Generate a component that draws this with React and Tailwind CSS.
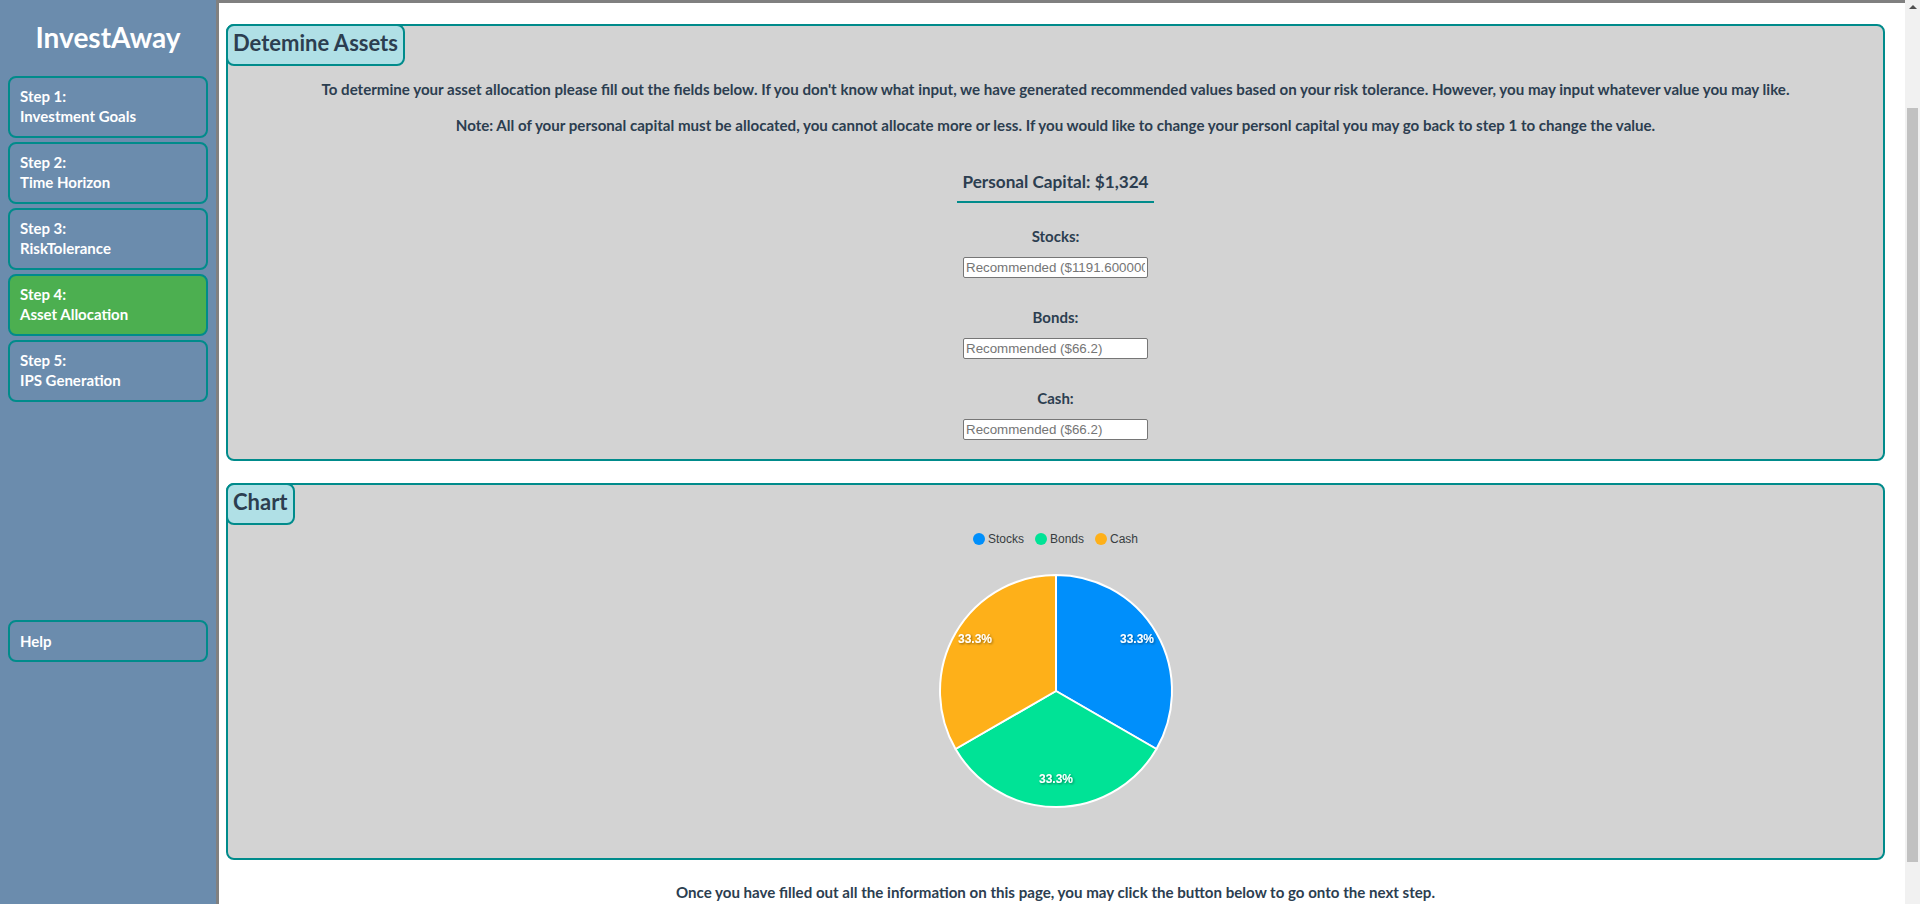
import React from "react";

const steps = [
  ["Step 1:", "Investment Goals", false],
  ["Step 2:", "Time Horizon", false],
  ["Step 3:", "RiskTolerance", false],
  ["Step 4:", "Asset Allocation", true],
  ["Step 5:", "IPS Generation", false],
];

function Pie() {
  const cx = 120, cy = 120, r = 116;
  const p = (deg) => {
    const a = ((deg - 90) * Math.PI) / 180;
    return [cx + r * Math.cos(a), cy + r * Math.sin(a)];
  };
  const slice = (a0, a1) => {
    const [x0, y0] = p(a0);
    const [x1, y1] = p(a1);
    return `M${cx},${cy} L${x0},${y0} A${r},${r} 0 0 1 ${x1},${y1} Z`;
  };
  return (
    <svg width="240" height="240" viewBox="0 0 240 240">
      <defs>
        <filter id="ds" x="-20%" y="-20%" width="140%" height="140%">
          <feDropShadow dx="1" dy="1" stdDeviation="1" floodColor="#000" floodOpacity="0.45" />
        </filter>
      </defs>
      <path d={slice(0, 120)} fill="#008FFB" stroke="#fff" strokeWidth="2" />
      <path d={slice(120, 240)} fill="#00E396" stroke="#fff" strokeWidth="2" />
      <path d={slice(240, 360)} fill="#FEB019" stroke="#fff" strokeWidth="2" />
      <g
        fill="#fff"
        fontFamily="Helvetica, 'Liberation Sans', Arial, sans-serif"
        fontSize="12"
        fontWeight="bold"
        textAnchor="middle"
        filter="url(#ds)"
      >
        <text x="201" y="72">33.3%</text>
        <text x="120" y="212">33.3%</text>
        <text x="39" y="72">33.3%</text>
      </g>
    </svg>
  );
}

function Field({ label, placeholder }) {
  return (
    <div className="flex flex-col items-center">
      <div className="text-[15px] font-bold leading-[18px]">{label}</div>
      <input
        className="mt-[12px] h-[21px] w-[185px] rounded-[2px] border border-[#767676] bg-white px-[2px] text-[13.33px] text-black placeholder:text-[#757575] outline-none"
        style={{ fontFamily: "'Liberation Sans', Arial, sans-serif" }}
        placeholder={placeholder}
      />
    </div>
  );
}

export default function App() {
  return (
    <div
      className="flex h-[904px] w-[1920px] overflow-hidden bg-white text-[#2c3e50]"
      style={{ fontFamily: "Lato, 'Open Sans', sans-serif" }}
    >
      <aside className="flex w-[216px] shrink-0 flex-col bg-[#6b8cad]">
        <div className="pt-[20px] text-center text-[28px] font-bold leading-[34px] text-white">
          InvestAway
        </div>
        <div className="mt-[22px] flex flex-col gap-[4px] pl-[8px]">
          {steps.map(([a, b, active]) => (
            <div
              key={a}
              className={`w-[200px] rounded-[8px] border-2 border-[#008b8b] pb-[10px] pl-[10px] pt-[8px] text-[15px] font-bold leading-[20px] text-white ${
                active ? "bg-[#4caf50]" : ""
              }`}
            >
              <div>{a}</div>
              <div>{b}</div>
            </div>
          ))}
        </div>
        <div className="ml-[8px] mt-[218px] w-[200px] rounded-[8px] border-2 border-[#008b8b] py-[9px] pl-[10px] text-[15px] font-bold leading-[20px] text-white">
          Help
        </div>
      </aside>
      <div className="w-[3px] shrink-0 bg-[#808080]" />
      <main className="flex min-w-0 flex-1 flex-col border-t-[3px] border-[#808080] pl-[7px] pr-[20px] pt-[21px]">
        <section className="flex h-[437px] flex-col rounded-[8px] border-2 border-[#008b8b] bg-[#d3d3d3]">
          <div className="-ml-[2px] -mt-[2px] self-start rounded-[8px] border-2 border-[#008b8b] bg-[#b0e0e6] px-[5px] pb-[6px] pt-[2px] text-[22px] font-bold leading-[30px]">
            Detemine Assets
          </div>
          <p className="mt-[14px] text-center text-[15.1px] font-bold leading-[18px]">
            To determine your asset allocation please fill out the fields below. If you don't know what input, we have generated recommended values based on your risk tolerance. However, you may input whatever value you may like.
          </p>
          <p className="mt-[18px] text-center text-[15.1px] font-bold leading-[18px]">
            Note: All of your personal capital must be allocated, you cannot allocate more or less. If you would like to change your personl capital you may go back to step 1 to change the value.
          </p>
          <div className="mt-[37px] flex justify-center">
            <div className="border-b-2 border-[#008b8b] px-[5px] pb-[8px] text-[17.2px] font-bold leading-[22px]">
              Personal Capital: $1,324
            </div>
          </div>
          <div className="mt-[24px] flex flex-col gap-[30px]">
            <Field label="Stocks:" placeholder="Recommended ($1191.6000000000001)" />
            <Field label="Bonds:" placeholder="Recommended ($66.2)" />
            <Field label="Cash:" placeholder="Recommended ($66.2)" />
          </div>
        </section>
        <section className="mt-[22px] flex h-[377px] flex-col rounded-[8px] border-2 border-[#008b8b] bg-[#d3d3d3]">
          <div className="-ml-[2px] -mt-[2px] self-start rounded-[8px] border-2 border-[#008b8b] bg-[#b0e0e6] px-[5px] pb-[6px] pt-[2px] text-[22px] font-bold leading-[30px]">
            Chart
          </div>
          <div
            className="mt-[7px] flex items-center justify-center gap-[11px] text-[12px] leading-[14px] text-[#373d3f]"
            style={{ fontFamily: "Helvetica, 'Liberation Sans', Arial, sans-serif" }}
          >
            <span className="flex items-center gap-[3px]">
              <span className="h-[12px] w-[12px] rounded-full bg-[#008FFB]" />
              Stocks
            </span>
            <span className="flex items-center gap-[3px]">
              <span className="h-[12px] w-[12px] rounded-full bg-[#00E396]" />
              Bonds
            </span>
            <span className="flex items-center gap-[3px]">
              <span className="h-[12px] w-[12px] rounded-full bg-[#FEB019]" />
              Cash
            </span>
          </div>
          <div className="mt-[25px] flex justify-center">
            <Pie />
          </div>
        </section>
        <p className="mt-[23px] text-center text-[15.1px] font-bold leading-[18px]">
          Once you have filled out all the information on this page, you may click the button below to go onto the next step.
        </p>
      </main>
      <div className="relative flex w-[15px] shrink-0 flex-col items-center bg-[#f1f1f1]">
        <div className="mt-[5px] h-0 w-0 border-x-[4px] border-b-[4px] border-x-transparent border-b-[#505050]" />
        <div className="mt-[99px] h-[754px] w-[11px] bg-[#c1c1c1]" />
      </div>
    </div>
  );
}
